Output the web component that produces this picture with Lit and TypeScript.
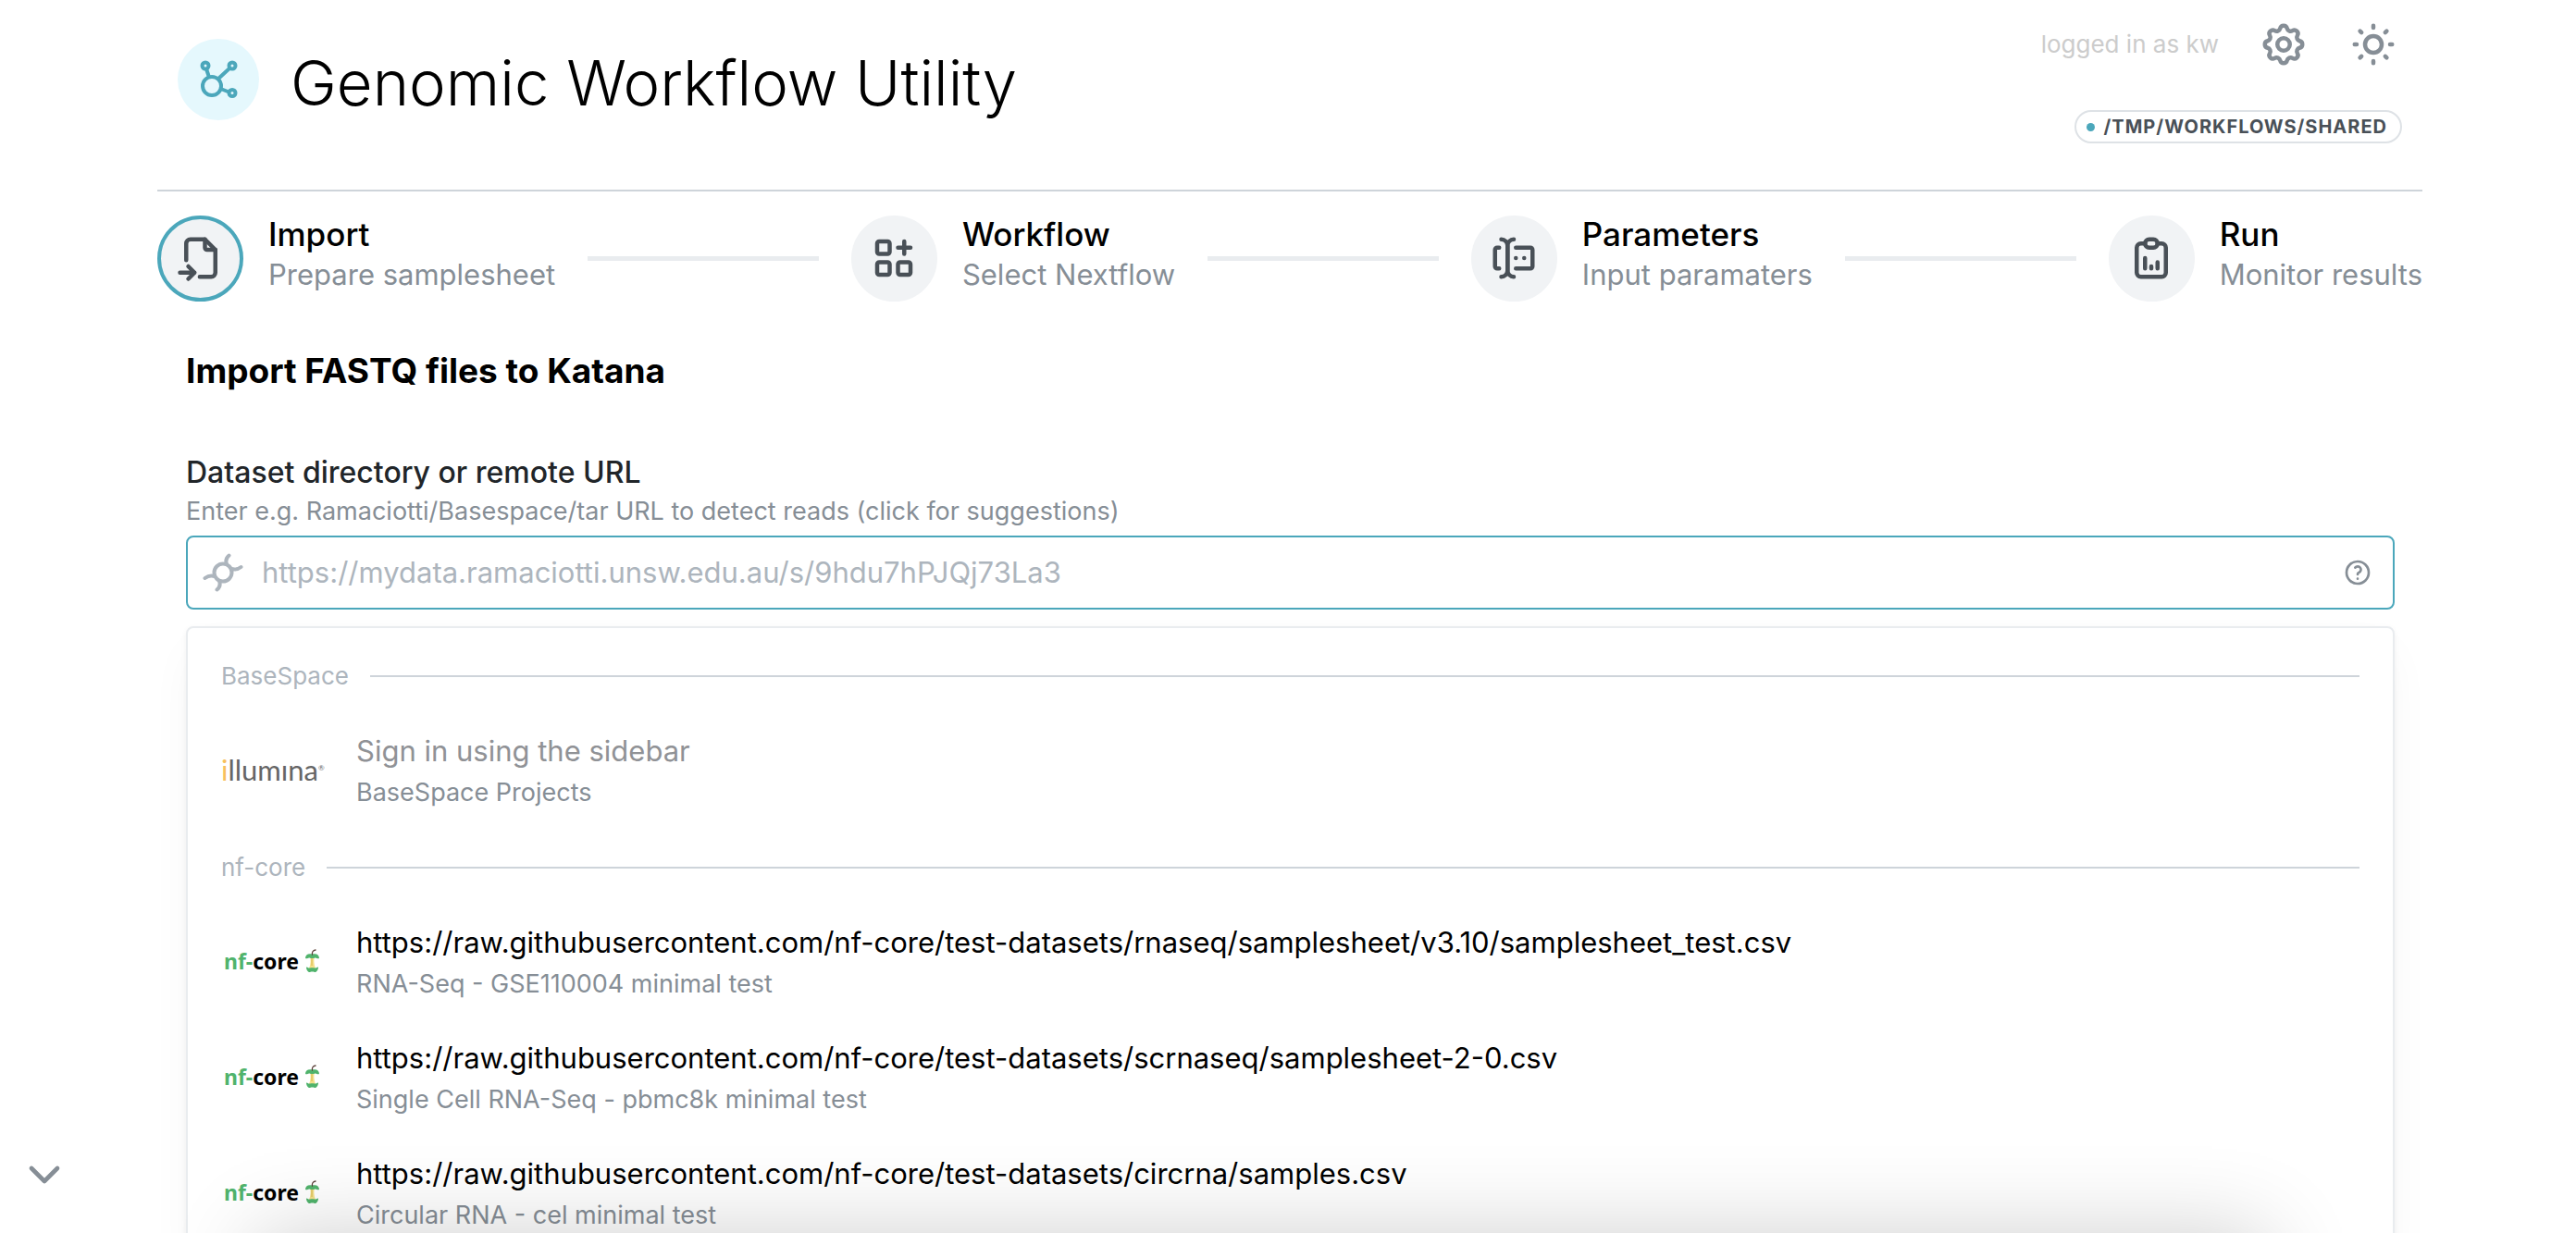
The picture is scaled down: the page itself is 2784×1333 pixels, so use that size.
import { LitElement, html, css, svg } from "lit";
import { customElement, property } from "lit/decorators.js";
import { classMap } from "lit/directives/class-map.js";

const icons: Record<string, ReturnType<typeof svg>> = {
  gear: svg`<path d="M10.325 4.317c.426 -1.756 2.924 -1.756 3.35 0a1.724 1.724 0 0 0 2.573 1.066c1.543 -.94 3.31 .826 2.37 2.37a1.724 1.724 0 0 0 1.065 2.572c1.756 .426 1.756 2.924 0 3.35a1.724 1.724 0 0 0 -1.066 2.573c.94 1.543 -.826 3.31 -2.37 2.37a1.724 1.724 0 0 0 -2.572 1.065c-.426 1.756 -2.924 1.756 -3.35 0a1.724 1.724 0 0 0 -2.573 -1.066c-1.543 .94 -3.31 -.826 -2.37 -2.37a1.724 1.724 0 0 0 -1.065 -2.572c-1.756 -.426 -1.756 -2.924 0 -3.35a1.724 1.724 0 0 0 1.066 -2.573c-.94 -1.543 .826 -3.31 2.37 -2.37c1 .608 2.296 .07 2.572 -1.065z"/><circle cx="12" cy="12" r="3"/>`,
  sun: svg`<circle cx="12" cy="12" r="4"/><path d="M3 12h1m8 -9v1m8 8h1m-9 8v1m-6.4 -15.4l.7 .7m12.1 -.7l-.7 .7m0 11.4l.7 .7m-12.1 -.7l-.7 .7"/>`,
  fileImport: svg`<path d="M14 3v4a1 1 0 0 0 1 1h4"/><path d="M5 13v-8a2 2 0 0 1 2 -2h7l5 5v11a2 2 0 0 1 -2 2h-5.5m-9.5 -2h7m-3 -3l3 3l-3 3"/>`,
  gridAdd: svg`<rect x="4" y="4" width="6" height="6" rx="1"/><rect x="4" y="14" width="6" height="6" rx="1"/><rect x="14" y="14" width="6" height="6" rx="1"/><path d="M14 7h6m-3 -3v6"/>`,
  forms: svg`<path d="M12 3a3 3 0 0 0 -3 3v12a3 3 0 0 0 3 3"/><path d="M6 3a3 3 0 0 1 3 3v12a3 3 0 0 1 -3 3"/><path d="M13 7h7a1 1 0 0 1 1 1v8a1 1 0 0 1 -1 1h-7"/><path d="M5 7h-1a1 1 0 0 0 -1 1v8a1 1 0 0 0 1 1h1"/><path d="M17 12h.01M13 12h.01"/>`,
  report: svg`<path d="M9 5h-2a2 2 0 0 0 -2 2v12a2 2 0 0 0 2 2h10a2 2 0 0 0 2 -2v-12a2 2 0 0 0 -2 -2h-2"/><rect x="9" y="3" width="6" height="4" rx="2"/><path d="M9 17v-5M12 17v-1M15 17v-3"/>`,
  help: svg`<circle cx="12" cy="12" r="9"/><path d="M12 17v.01M12 13.5a1.5 1.5 0 0 1 1 -1.5a2.6 2.6 0 1 0 -3 -4"/>`,
  chevron: svg`<path d="M6 9l6 6l6 -6"/>`,
};

@customElement("line-icon")
export class LineIcon extends LitElement {
  @property() name = "";

  static styles = css`
    :host { display: block; }
    .glyph {
      display: block;
      width: 100%;
      height: 100%;
      fill: none;
      stroke: currentColor;
      stroke-width: 2;
      stroke-linecap: round;
      stroke-linejoin: round;
    }
  `;

  render() {
    return html`<svg class="glyph" viewBox="0 0 24 24" aria-hidden="true">${icons[this.name]}</svg>`;
  }
}

@customElement("source-logo")
export class SourceLogo extends LitElement {
  @property() brand: "illumina" | "nf-core" = "nf-core";

  static styles = css`
    :host { display: block; }
    .illumina {
      display: flex;
      align-items: flex-start;
      font: 400 31px/40px Lato, sans-serif;
      color: #666666;
    }
    .illumina .accent { color: #f8c05c; }
    .illumina .mark { font-size: 8px; line-height: 36px; }
    .nfcore {
      display: flex;
      align-items: center;
      gap: 7px;
      padding-left: 3px;
      font: 700 23px/32px "Noto Sans", sans-serif;
      color: #000000;
    }
    .nfcore .accent { color: #50b36c; }
    .apple { width: 15px; height: 26px; }
  `;

  render() {
    if (this.brand === "illumina") {
      return html`<div class="illumina"><span><span class="accent">i</span>llumına</span><span class="mark">®</span></div>`;
    }
    return html`<div class="nfcore">
      <span><span class="accent">nf-</span>core</span>
      <svg class="apple" viewBox="0 0 15 26" aria-hidden="true">
        <path d="M5 7h5c-1 5 -1 9 1 14h-7c2 -5 2 -9 1 -14z" fill="#f3e08b"/>
        <path d="M7 10v8" stroke="#d9b84a" stroke-width="1"/>
        <path d="M0 10c0 -4 3 -5.500 7.500 -4.500c4.500 -1 7.500 .5 7.500 4.500c-2 1 -3 -1 -4.500 -.5c-2 .8 -4 .8 -6 0c-1.500 -.5 -2.500 1.500 -4.500 .5z" fill="#50b36c"/>
        <path d="M1 19.500c2 0 2 1.500 4 1c1.500 -.5 3.500 -.5 5 0c2 .5 2 -1 4 -1c0 3 -2 6 -4 5.500c-1.500 -.6 -3.500 -.6 -5 0c-2 .5 -4 -2.500 -4 -5.500z" fill="#50b36c"/>
        <path d="M7.500 6c-.5 -2.500 .5 -4.500 3.500 -5" fill="none" stroke="#5a4038" stroke-width="1.300" stroke-linecap="round"/>
      </svg>
    </div>`;
  }
}

const steps = [
  { icon: "fileImport", title: "Import", detail: "Prepare samplesheet" },
  { icon: "gridAdd", title: "Workflow", detail: "Select Nextflow" },
  { icon: "forms", title: "Parameters", detail: "Input paramaters" },
  { icon: "report", title: "Run", detail: "Monitor results" },
];

const groups = [
  {
    label: "BaseSpace",
    items: [{ brand: "illumina", value: "Sign in using the sidebar", detail: "BaseSpace Projects", disabled: true }],
  },
  {
    label: "nf-core",
    items: [
      {
        brand: "nf-core",
        value: "https://raw.githubusercontent.com/nf-core/test-datasets/rnaseq/samplesheet/v3.10/samplesheet_test.csv",
        detail: "RNA-Seq - GSE110004 minimal test",
        disabled: false,
      },
      {
        brand: "nf-core",
        value: "https://raw.githubusercontent.com/nf-core/test-datasets/scrnaseq/samplesheet-2-0.csv",
        detail: "Single Cell RNA-Seq - pbmc8k minimal test",
        disabled: false,
      },
      {
        brand: "nf-core",
        value: "https://raw.githubusercontent.com/nf-core/test-datasets/circrna/samples.csv",
        detail: "Circular RNA - cel minimal test",
        disabled: false,
      },
    ],
  },
];

@customElement("app-root")
export class AppRoot extends LitElement {
  @property({ type: Number }) active = 0;

  static styles = css`
    :host {
      display: block;
      height: 100vh;
      overflow: hidden;
      background: #ffffff;
      color: #000000;
      font-family: Inter, "Liberation Sans", sans-serif;
    }
    * { box-sizing: border-box; }
    button { font: inherit; color: inherit; background: none; border: 0; padding: 0; text-align: left; cursor: pointer; }
    h1, h2, p, ul, ol { margin: 0; padding: 0; }
    ul, ol { list-style: none; }

    .page { margin: 0 166px 0 170px; }

    .header {
      display: flex;
      justify-content: space-between;
      align-items: flex-start;
      height: 207px;
      padding: 0 22px;
      border-bottom: 2px solid #ced4da;
    }
    .brand { display: flex; align-items: flex-start; gap: 34px; padding-top: 42px; }
    .badge-icon { width: 88px; height: 88px; border-radius: 50%; background: #e5f8fd; color: #4ba7bb; }
    .network { display: block; fill: none; stroke: currentColor; stroke-width: 4; }
    .title { font-size: 67px; line-height: 96px; font-weight: 300; }

    .account { display: flex; flex-direction: column; align-items: flex-end; gap: 44px; padding-top: 21px; }
    .tools { display: flex; align-items: center; gap: 43px; padding-right: 4px; color: #868e96; }
    .user { font-size: 26px; line-height: 36px; color: #cccccc; }
    .tool, .tool line-icon { display: block; width: 54px; height: 54px; }
    .workdir {
      display: flex;
      align-items: center;
      gap: 10px;
      height: 36px;
      padding: 0 14px 0 11px;
      border: 2px solid #dee2e6;
      border-radius: 18px;
      font-size: 20px;
      line-height: 32px;
      font-weight: 700;
      letter-spacing: 1px;
      color: #495057;
    }
    .dot { width: 9px; height: 9px; border-radius: 50%; background: #4ba7bb; }

    .stepper { display: flex; align-items: center; gap: 35px; padding-top: 25px; }
    .step { display: flex; align-items: center; gap: 27px; white-space: nowrap; }
    .rule { flex: 1; height: 5px; background: #e9ecef; }
    .bubble {
      display: grid;
      place-items: center;
      width: 93px;
      height: 93px;
      border: 4px solid #f1f3f5;
      border-radius: 50%;
      background: #f1f3f5;
      color: #495057;
    }
    .bubble.current { border-color: #4ba7bb; }
    .bubble line-icon { width: 54px; height: 54px; }
    .step-text { display: grid; padding-bottom: 6px; }
    .step-title { font-size: 35px; line-height: 42px; font-weight: 500; }
    .step-detail { font-size: 31px; line-height: 46px; color: #868e96; }

    .content { padding: 0 30px 0 31px; }
    .heading { padding-top: 51px; font-size: 37px; line-height: 48px; font-weight: 700; }
    .label { display: block; padding-top: 64px; font-size: 32px; line-height: 44px; font-weight: 500; color: #212529; }
    .hint { font-size: 27px; line-height: 40px; color: #868e96; }
    .field {
      display: flex;
      align-items: center;
      gap: 18px;
      height: 80px;
      margin-top: 6px;
      padding: 0 22px 0 14px;
      border: 2px solid #4ba7bb;
      border-radius: 8px;
      color: #adb5bd;
    }
    .source-icon { width: 48px; height: 48px; fill: none; stroke: currentColor; stroke-width: 4; stroke-linecap: round; }
    .input { flex: 1; min-width: 0; border: 0; outline: 0; padding: 0; background: none; font: inherit; font-size: 31px; line-height: 44px; color: #000000; }
    .input::placeholder { color: #adb5bd; opacity: 1; }
    .help, .help line-icon { display: block; width: 32px; height: 32px; color: #868e96; }

    .dropdown {
      margin-top: 18px;
      padding: 11px 36px;
      border: 2px solid #e9ecef;
      border-radius: 8px;
      background: #ffffff;
      box-shadow: 0 2px 6px rgba(0, 0, 0, 0.05), 0 20px 50px -10px rgba(0, 0, 0, 0.05), 0 14px 14px -10px rgba(0, 0, 0, 0.04);
    }
    .group-label { display: flex; align-items: center; gap: 23px; height: 82px; font-size: 26px; line-height: 40px; color: #adb5bd; }
    .group-label::after { content: ""; flex: 1; height: 2px; background: #ced4da; }
    .option { display: flex; align-items: center; gap: 35px; width: 100%; padding: 15px 0 20px; }
    .option source-logo { width: 111px; }
    .option:disabled { cursor: default; }
    .option:disabled .value { color: #909296; }
    .option-text { display: grid; }
    .value { font-size: 31px; line-height: 50px; color: #000000; }
    .detail { font-size: 27px; line-height: 40px; color: #868e96; }

    .expand { position: fixed; left: 20px; bottom: 35px; color: #868e96; }
    .expand line-icon { width: 56px; height: 56px; }
    .panel-shadow {
      position: fixed;
      top: 100%;
      left: 10%;
      right: 12%;
      height: 400px;
      box-shadow: 0 0 90px rgba(0, 0, 0, 0.19);
      pointer-events: none;
    }
  `;

  render() {
    return html`
      <div class="page">
        <header class="header">
          <div class="brand">
            <div class="badge-icon">
              <svg class="network" viewBox="0 0 88 88" aria-hidden="true">
                <circle cx="37" cy="51" r="10"/>
                <circle cx="30" cy="29" r="3.500"/>
                <circle cx="59" cy="29" r="3.500"/>
                <circle cx="59" cy="58.500" r="3.500"/>
                <path d="M31 32.500L34 41.500M56.500 31.500L43.500 43.500M46.500 54L55.500 57.500"/>
              </svg>
            </div>
            <h1 class="title">Genomic Workflow Utility</h1>
          </div>
          <div class="account">
            <div class="tools">
              <span class="user">logged in as kw</span>
              <button class="tool" aria-label="Settings"><line-icon name="gear"></line-icon></button>
              <button class="tool" aria-label="Toggle colour scheme"><line-icon name="sun"></line-icon></button>
            </div>
            <div class="workdir"><span class="dot"></span><span>/TMP/WORKFLOWS/SHARED</span></div>
          </div>
        </header>

        <nav class="stepper" aria-label="Progress">
          ${steps.map(
            (step, i) => html`
              ${i ? html`<span class="rule"></span>` : ""}
              <button class="step" @click=${() => (this.active = i)}>
                <span class=${classMap({ bubble: true, current: i === this.active })}>
                  <line-icon name=${step.icon}></line-icon>
                </span>
                <span class="step-text">
                  <span class="step-title">${step.title}</span>
                  <span class="step-detail">${step.detail}</span>
                </span>
              </button>
            `
          )}
        </nav>

        <main class="content">
          <h2 class="heading">Import FASTQ files to Katana</h2>
          <label class="label" for="dataset">Dataset directory or remote URL</label>
          <p class="hint" id="dataset-hint">Enter e.g. Ramaciotti/Basespace/tar URL to detect reads (click for suggestions)</p>
          <div class="field">
            <svg class="source-icon" viewBox="0 0 48 48" aria-hidden="true">
              <circle cx="24" cy="24" r="9.500"/>
              <path d="M30.500 5.500C27 8.500 26.500 11 28 15M43.500 18C39 21.500 36 21 33 20M17.500 42.500C21 39.500 21.500 37 20 33M4.500 30C9 26.500 12 27 15 28"/>
            </svg>
            <input class="input" id="dataset" type="text" aria-describedby="dataset-hint" placeholder="https://mydata.ramaciotti.unsw.edu.au/s/9hdu7hPJQj73La3" />
            <button class="help" aria-label="Help"><line-icon name="help"></line-icon></button>
          </div>
          <div class="dropdown">
            ${groups.map(
              (group) => html`
                <div class="group-label">${group.label}</div>
                <ul>
                  ${group.items.map(
                    (item) => html`
                      <li>
                        <button class="option" ?disabled=${item.disabled}>
                          <source-logo brand=${item.brand}></source-logo>
                          <span class="option-text">
                            <span class="value">${item.value}</span>
                            <span class="detail">${item.detail}</span>
                          </span>
                        </button>
                      </li>
                    `
                  )}
                </ul>
              `
            )}
          </div>
        </main>
      </div>
      <div class="panel-shadow"></div>
      <button class="expand" aria-label="Expand panel"><line-icon name="chevron"></line-icon></button>
    `;
  }
}
